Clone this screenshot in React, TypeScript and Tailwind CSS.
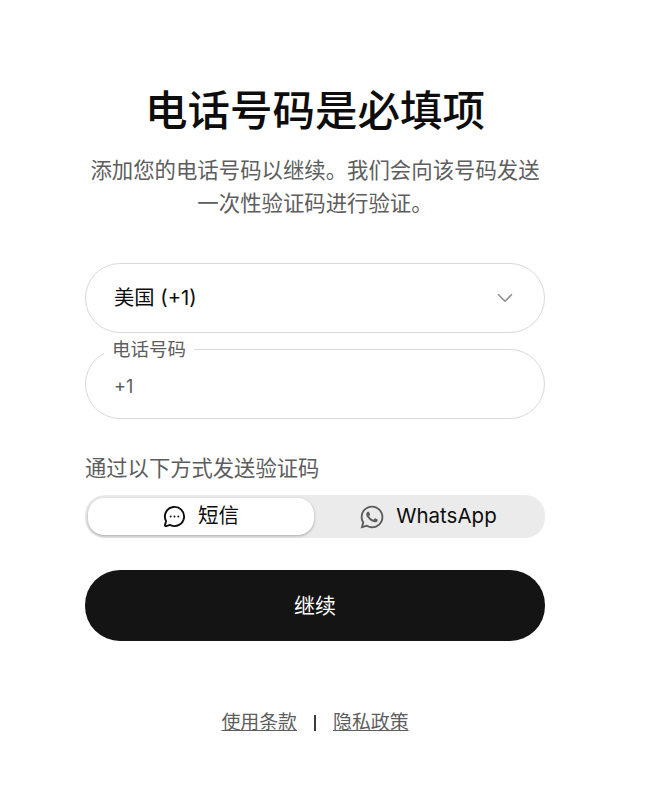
import React from "react";
import { ChevronDown, MessageCircleMore } from "lucide-react";
import { FaWhatsapp } from "react-icons/fa";

export default function App() {
    return (
        <main className="min-h-[800px] bg-white font-['Inter','Noto_Sans_CJK_SC',sans-serif]">
            <div className="w-[630px] flex flex-col items-center pt-[86px]">
                <h1 className="text-[42.5px] leading-[50px] font-medium text-[#0d0d0d]">电话号码是必填项</h1>
                <p className="mt-[18px] w-[460px] text-center text-[21.4px] leading-[33px] text-[#5d5d5d]">
                    添加您的电话号码以继续。我们会向该号码发送一次性验证码进行验证。
                </p>

                <div className="mt-[43px] w-[460px]">
                    <button className="w-full h-[70px] rounded-[35px] border border-[#d9d9d9] flex items-center justify-between pl-[28px] pr-[26px] text-[20.3px] text-[#0d0d0d]">
                        <span>美国 (+1)</span>
                        <ChevronDown className="w-[26px] h-[26px] text-[#8f8f8f]" strokeWidth={1.5} />
                    </button>

                    <fieldset className="mt-[6px] h-[80px] rounded-[35px] border border-[#d9d9d9] pl-[18px] pt-[14px]">
                        <legend className="px-[8px] text-[18.5px] leading-[20px] text-[#5d5d5d]">电话号码</legend>
                        <span className="ml-[10px] text-[18px] leading-[28px] text-[#5d5d5d]">+1</span>
                    </fieldset>

                    <p className="mt-[35px] text-[21.3px] leading-[28px] text-[#5d5d5d]">通过以下方式发送验证码</p>

                    <div className="mt-[13px] h-[43px] rounded-[20px] bg-[#ebebeb] p-[3px] flex">
                        <div className="w-[226px] rounded-[16px] bg-white shadow-[0_1px_3px_rgba(0,0,0,0.3)] flex items-center justify-center gap-[12px] text-[20.5px] text-[#0d0d0d]">
                            <MessageCircleMore className="w-[23px] h-[23px]" strokeWidth={2} />
                            <span>短信</span>
                        </div>
                        <div className="flex-1 flex items-center justify-center gap-[11px] text-[20.5px] text-[#0d0d0d]">
                            <FaWhatsapp className="w-[26px] h-[26px] text-[#5d5d5d]" />
                            <span>WhatsApp</span>
                        </div>
                    </div>

                    <button className="mt-[32px] w-full h-[71px] rounded-[35px] bg-[#141414] text-white text-[21px]">继续</button>
                </div>

                <div className="mt-[68px] flex items-center text-[18.9px] leading-[28px] text-[#5d5d5d]">
                    <a href="#" className="underline">使用条款</a>
                    <span className="mx-[17px] w-[2px] h-[16px] bg-[#3d3d3d]" />
                    <a href="#" className="underline">隐私政策</a>
                </div>
            </div>
        </main>
    );
}
